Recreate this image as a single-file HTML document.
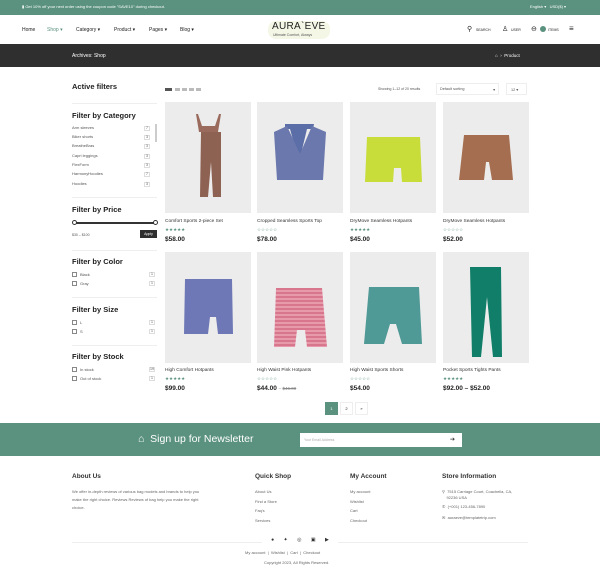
<!DOCTYPE html>
<html><head><meta charset="utf-8"><style>
*{margin:0;padding:0;box-sizing:border-box}
body{width:600px;height:575px;overflow:hidden;background:#fff;font-family:"Liberation Sans",sans-serif;color:#222;position:relative}
.a{position:absolute}
.top{left:0;top:0;width:600px;height:15px;background:#5a917f;color:#fff;font-size:4px}
.hdr{top:15px;left:0;width:600px;height:29px;background:#fff;font-size:5px}
.dark{top:44px;left:0;width:600px;height:23px;background:#2f2f2f;color:#fff;font-size:5px}
.h{font-size:7.5px;font-weight:bold;color:#222}
.sm{font-size:4px;color:#555}
.line{height:1px;background:#eee}
.cnt{width:6px;height:5px;border:1px solid #ddd;font-size:3.5px;text-align:center;line-height:3px;color:#555}
.card{width:86px;height:111px;background:#ececec}
.t{font-size:4.8px;color:#333}
.st{font-size:4.5px;color:#5a917f;letter-spacing:0}
.p{font-size:6.5px;font-weight:bold;color:#222}
.cb{width:5px;height:5px;border:1px solid #888}
.news{top:423px;left:0;width:600px;height:33px;background:#5a917f}
.fh{font-size:6.5px;font-weight:bold;color:#333}
.fl{font-size:4px;color:#666;line-height:9.5px}
</style></head><body>
<div class="a top"><span class="a" style="left:22px;top:4px">▮ Get 10% off your next order using the coupon code "SAVE10" during checkout.</span><span class="a" style="left:530px;top:4px">English ▾ &nbsp; USD($) ▾</span></div>
<div class="a hdr">
<span class="a" style="left:22px;top:12px">Home</span>
<span class="a" style="left:47px;top:12px;color:#5a917f">Shop ▾</span>
<span class="a" style="left:76px;top:12px">Category ▾</span>
<span class="a" style="left:114px;top:12px">Product ▾</span>
<span class="a" style="left:149px;top:12px">Pages ▾</span>
<span class="a" style="left:180px;top:12px">Blog ▾</span>
<div class="a" style="left:268px;top:6px;width:62px;height:18px;background:#f4f7e6;border-radius:8px"></div>
<span class="a" style="left:272px;top:6px;font-size:10px;letter-spacing:.3px">AURA`EVE</span>
<span class="a" style="left:273px;top:18px;font-size:3.5px;color:#555">Ultimate Comfort, Always</span>
<span class="a" style="left:467px;top:10px;font-size:7px">⚲</span><span class="a" style="left:476px;top:13px;font-size:3.5px">SEARCH</span>
<span class="a" style="left:502px;top:10px;font-size:7px">♙</span><span class="a" style="left:511px;top:13px;font-size:3.5px">USER</span>
<span class="a" style="left:531px;top:10px;font-size:7px">⊖</span><span class="a" style="left:540px;top:11px;width:6px;height:6px;border-radius:3px;background:#5a917f"></span><span class="a" style="left:548px;top:13px;font-size:3.5px">ITEMS</span>
<span class="a" style="left:569px;top:9px;font-size:8px">≡</span>
</div>
<div class="a dark"><span class="a" style="left:72px;top:9px">Archives: Shop</span><span class="a" style="left:495px;top:9px;font-size:4.5px">⌂ &nbsp;› &nbsp;Product</span></div>
<span class="a h" style="left:72px;top:82px">Active filters</span>
<div class="a" style="left:165px;top:88px;width:7px;height:3px;background:#555"></div>
<div class="a" style="left:175px;top:88px;width:28px;height:3px;background:repeating-linear-gradient(90deg,#bbb 0 5px,transparent 5px 7px)"></div>
<span class="a sm" style="left:378px;top:87px;font-size:3.5px">Showing 1–12 of 20 results</span>
<div class="a" style="left:436px;top:83px;width:63px;height:12px;border:1px solid #eee;font-size:3.8px;color:#555;padding:3px 3px">Default sorting<span style="float:right">▾</span></div>
<div class="a" style="left:506px;top:83px;width:21px;height:12px;border:1px solid #eee;font-size:3.8px;color:#555;padding:3px 4px">12 ▾</div>
<div class="a line" style="left:72px;top:103px;width:85px"></div>
<span class="a h" style="left:72px;top:111px">Filter by Category</span>
<span class="a sm" style="left:72px;top:125px">Arm sleeves</span><div class="a cnt" style="left:144px;top:126px">7</div>
<span class="a sm" style="left:72px;top:134px">Biker shorts</span><div class="a cnt" style="left:144px;top:135px">3</div>
<span class="a sm" style="left:72px;top:143px">BreatheBras</span><div class="a cnt" style="left:144px;top:144px">3</div>
<span class="a sm" style="left:72px;top:153px">Capri leggings</span><div class="a cnt" style="left:144px;top:154px">3</div>
<span class="a sm" style="left:72px;top:162px">FlexForm</span><div class="a cnt" style="left:144px;top:163px">3</div>
<span class="a sm" style="left:72px;top:171px">HarmonyHoodies</span><div class="a cnt" style="left:144px;top:172px">7</div>
<span class="a sm" style="left:72px;top:181px">Hoodies</span><div class="a cnt" style="left:144px;top:182px">3</div>
<div class="a" style="left:155px;top:124px;width:2px;height:18px;background:#ccc"></div>
<div class="a line" style="left:72px;top:197px;width:85px"></div>
<span class="a h" style="left:72px;top:205px">Filter by Price</span>
<div class="a" style="left:74px;top:222px;width:81px;height:1.5px;background:#333"></div>
<div class="a" style="left:72px;top:220px;width:5px;height:5px;border:1px solid #333;border-radius:50%;background:#fff"></div>
<div class="a" style="left:153px;top:220px;width:5px;height:5px;border:1px solid #333;border-radius:50%;background:#fff"></div>
<span class="a sm" style="left:72px;top:233px;font-size:3.5px">$30 – $100</span>
<div class="a" style="left:140px;top:230px;width:17px;height:8px;background:#2f2f2f;color:#fff;font-size:3.5px;text-align:center;line-height:8px">Apply</div>
<div class="a line" style="left:72px;top:250px;width:85px"></div>
<span class="a h" style="left:72px;top:257px">Filter by Color</span>
<div class="a cb" style="left:72px;top:272px"></div><span class="a sm" style="left:80px;top:272px">Black</span><div class="a cnt" style="left:149px;top:272px">1</div>
<div class="a cb" style="left:72px;top:281px"></div><span class="a sm" style="left:80px;top:281px">Gray</span><div class="a cnt" style="left:149px;top:281px">1</div>
<div class="a line" style="left:72px;top:297px;width:85px"></div>
<span class="a h" style="left:72px;top:305px">Filter by Size</span>
<div class="a cb" style="left:72px;top:320px"></div><span class="a sm" style="left:80px;top:320px">L</span><div class="a cnt" style="left:149px;top:320px">1</div>
<div class="a cb" style="left:72px;top:329px"></div><span class="a sm" style="left:80px;top:329px">S</span><div class="a cnt" style="left:149px;top:329px">1</div>
<div class="a line" style="left:72px;top:345px;width:85px"></div>
<span class="a h" style="left:72px;top:352px">Filter by Stock</span>
<div class="a cb" style="left:72px;top:367px"></div><span class="a sm" style="left:80px;top:367px">In stock</span><div class="a cnt" style="left:149px;top:367px">19</div>
<div class="a cb" style="left:72px;top:376px"></div><span class="a sm" style="left:80px;top:376px">Out of stock</span><div class="a cnt" style="left:149px;top:376px">1</div>

<div class="a card" style="left:165px;top:102px"><svg width="86" height="111"><path d="M31 12 L34 30 L53 30 L56 12 L54 12 L50 24 L37 24 L33 12Z" fill="#9a6b5d"/><path d="M36 30 L56 30 L56 95 L48 95 L46 60 L43 95 L35 95Z" fill="#8e6253"/></svg></div>
<div class="a card" style="left:257px;top:102px"><svg width="86" height="111"><path d="M28 22 L57 22 L56 27 L50 27 L44 52 L40 52 L33 27 L28 27Z" fill="#5b6ea8"/><path d="M17 30 L30 24 L43 52 L55 24 L69 30 L66 78 L20 78Z" fill="#6b78ad"/></svg></div>
<div class="a card" style="left:350px;top:102px"><svg width="86" height="111"><path d="M17 35 L70 35 L72 80 L52 80 L51 66 L44 66 L43 80 L15 80Z" fill="#c8dc3a"/></svg></div>
<div class="a card" style="left:443px;top:102px"><svg width="86" height="111"><path d="M21 33 L66 33 L70 78 L49 78 L46 60 L43 60 L41 78 L16 78Z" fill="#a56e50"/></svg></div>
<span class="a t" style="left:165px;top:219px">Comfort Sports 2-piece Set</span><span class="a st" style="left:165px;top:227px">★★★★★</span><span class="a p" style="left:165px;top:236px">$58.00</span>
<span class="a t" style="left:257px;top:219px">Cropped Seamless Sports Top</span><span class="a st" style="left:257px;top:227px">☆☆☆☆☆</span><span class="a p" style="left:257px;top:236px">$78.00</span>
<span class="a t" style="left:350px;top:219px">DryMove Seamless Hotpants</span><span class="a st" style="left:350px;top:227px">★★★★★</span><span class="a p" style="left:350px;top:236px">$45.00</span>
<span class="a t" style="left:443px;top:219px">DryMove Seamless Hotpants</span><span class="a st" style="left:443px;top:227px">☆☆☆☆☆</span><span class="a p" style="left:443px;top:236px">$52.00</span>
<div class="a card" style="left:165px;top:252px"><svg width="86" height="111"><path d="M20 27 L67 27 L68 82 L53 82 L51 65 L45 65 L43 82 L19 82Z" fill="#6e78b6"/></svg></div>
<div class="a card" style="left:257px;top:252px"><svg width="86" height="111"><defs><pattern id="s" width="4" height="4" patternUnits="userSpaceOnUse"><rect width="4" height="2" fill="#d8768e"/><rect y="2" width="4" height="2" fill="#e79aaa"/></pattern></defs><path d="M19 36 L65 36 L70 95 L50 95 L48 78 L40 78 L38 95 L17 95Z" fill="url(#s)"/></svg></div>
<div class="a card" style="left:350px;top:252px"><svg width="86" height="111"><path d="M19 35 L69 35 L72 92 L52 92 L46 72 L40 72 L34 92 L14 92Z" fill="#4f9996"/></svg></div>
<div class="a card" style="left:443px;top:252px"><svg width="86" height="111"><path d="M27 15 L58 15 L59 105 L50 105 L44 45 L38 105 L29 105Z" fill="#107e68"/></svg></div>
<span class="a t" style="left:165px;top:368px">High Comfort Hotpants</span><span class="a st" style="left:165px;top:376px">★★★★★</span><span class="a p" style="left:165px;top:385px">$99.00</span>
<span class="a t" style="left:257px;top:368px">High Waist Pink Hotpants</span><span class="a st" style="left:257px;top:376px">☆☆☆☆☆</span><span class="a p" style="left:257px;top:385px">$44.00 <span style="font-weight:normal;color:#888;font-size:4.5px">– <s>$46.00</s></span></span>
<span class="a t" style="left:350px;top:368px">High Waist Sports Shorts</span><span class="a st" style="left:350px;top:376px">☆☆☆☆☆</span><span class="a p" style="left:350px;top:385px">$54.00</span>
<span class="a t" style="left:443px;top:368px">Pocket Sports Tights Pants</span><span class="a st" style="left:443px;top:376px">★★★★★</span><span class="a p" style="left:443px;top:385px">$92.00 – $52.00</span>
<div class="a" style="left:325px;top:402px;width:13px;height:13px;background:#5a917f;color:#fff;font-size:4px;text-align:center;line-height:13px">1</div>
<div class="a" style="left:340px;top:402px;width:13px;height:13px;border:1px solid #eee;font-size:4px;text-align:center;line-height:11px">2</div>
<div class="a" style="left:355px;top:402px;width:13px;height:13px;border:1px solid #eee;font-size:4px;text-align:center;line-height:11px">»</div>

<div class="a news"><span class="a" style="left:138px;top:10px;color:#fff;font-size:10.5px">⌂ &nbsp;Sign up for Newsletter</span>
<div class="a" style="left:300px;top:10px;width:162px;height:14px;background:#fff;font-size:3.5px;color:#aaa;padding:5px 4px">Your Email Address<span class="a" style="left:150px;top:3px;color:#333;font-size:6px">➔</span></div></div>
<span class="a fh" style="left:72px;top:473px">About Us</span>
<div class="a fl" style="left:72px;top:488px;width:130px;line-height:8px">We offer in-depth reviews of various bag models and brands to help you make the right choice. Reviews Reviews of bag help you make the right choice.</div>
<span class="a fh" style="left:255px;top:473px">Quick Shop</span>
<div class="a fl" style="left:255px;top:487px">About Us<br>Find a Store<br>Faq's<br>Services</div>
<span class="a fh" style="left:350px;top:473px">My Account</span>
<div class="a fl" style="left:350px;top:487px">My account<br>Wishlist<br>Cart<br>Checkout</div>
<span class="a fh" style="left:442px;top:473px">Store Information</span>
<div class="a fl" style="left:442px;top:489px;line-height:5.5px">⚲ &nbsp;7515 Carriage Court, Coachella, CA,<br>&nbsp;&nbsp;&nbsp;&nbsp;92236 USA</div>
<div class="a fl" style="left:442px;top:502px">✆ &nbsp;(+001) 123-456-7890</div>
<div class="a fl" style="left:442px;top:513px">✉ &nbsp;auraeve@templatetrip.com</div>
<div class="a line" style="left:72px;top:542px;width:456px"></div>
<div class="a" style="left:262px;top:537px;width:76px;height:10px;background:#fff;font-size:5px;color:#333;word-spacing:8px;text-align:center">● ✦ ◎ ▣ ▶</div>
<div class="a fl" style="left:245px;top:548px;font-size:4px">My account &nbsp;| &nbsp;Wishlist &nbsp;| &nbsp;Cart &nbsp;| &nbsp;Checkout</div>
<div class="a fl" style="left:264px;top:558px;font-size:4px">Copyright 2023, All Rights Reserved.</div>
</body></html>
